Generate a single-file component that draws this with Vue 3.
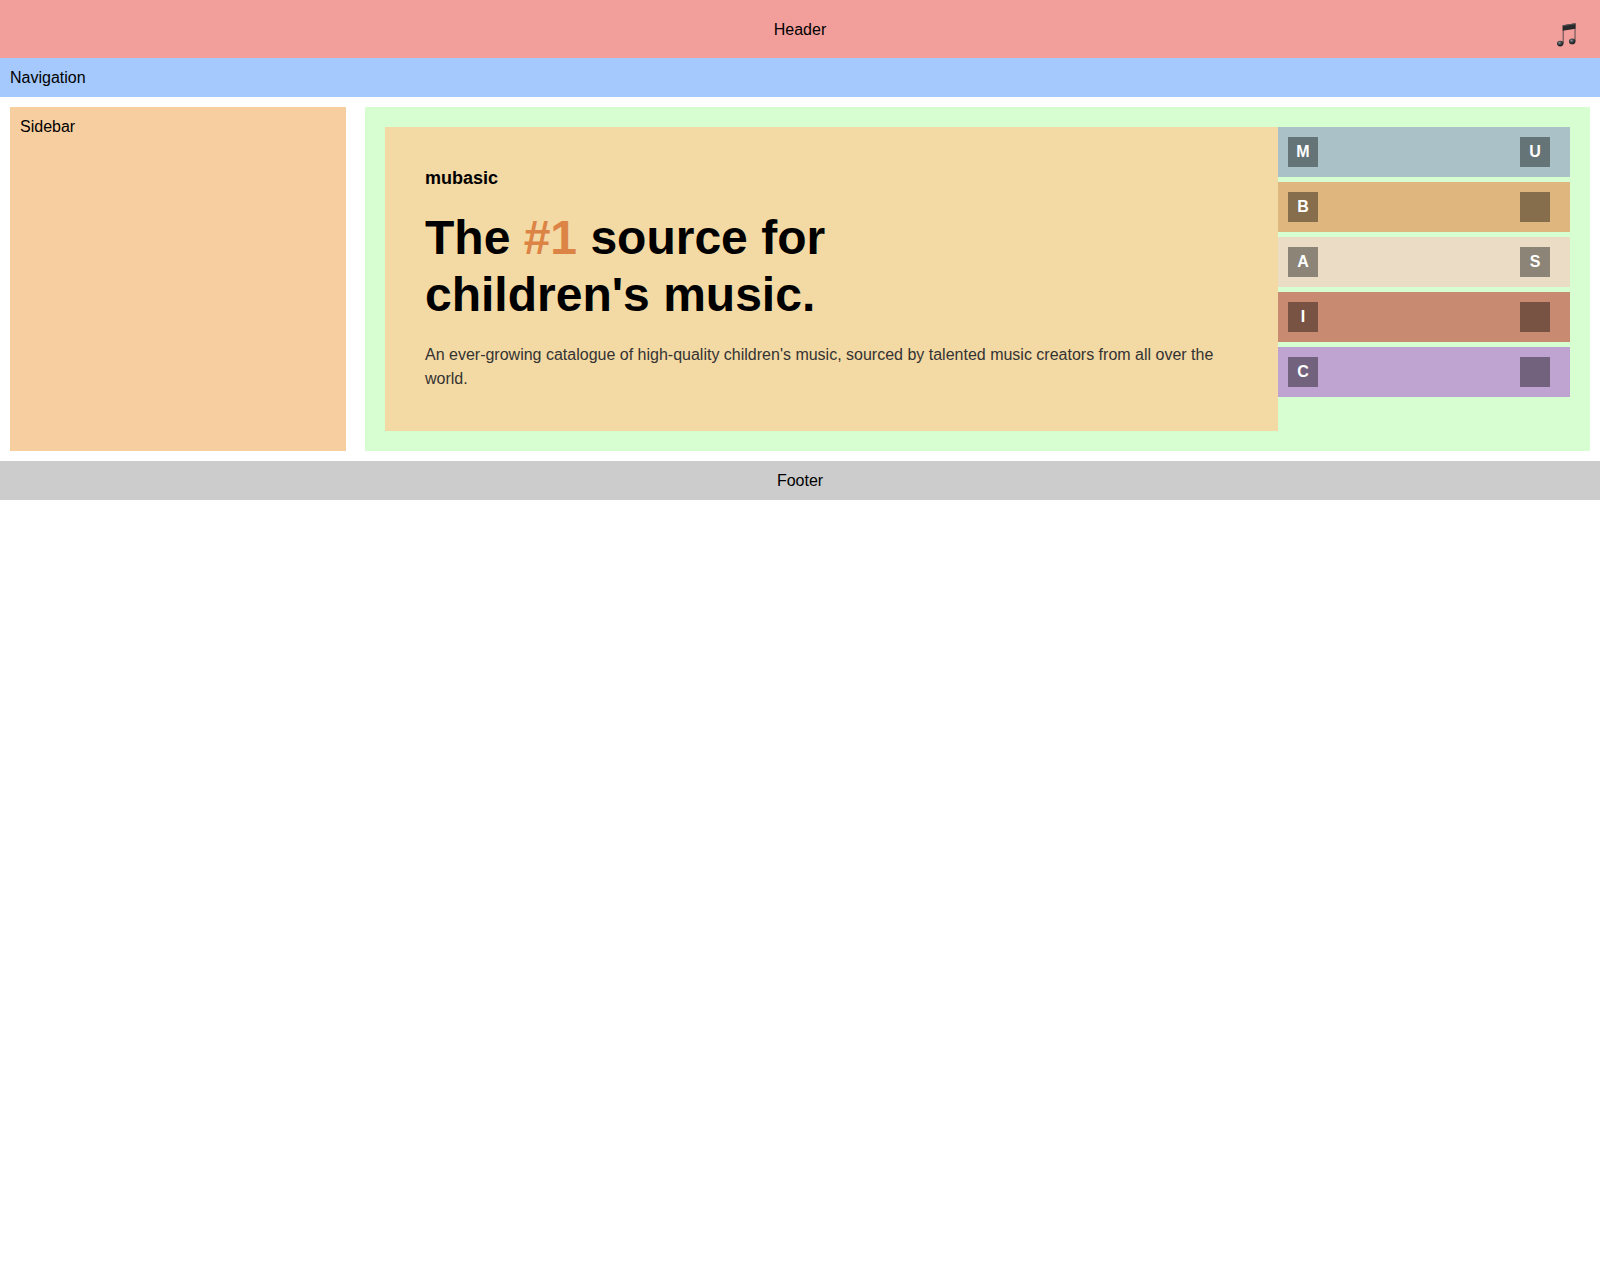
<script setup>
const rows = [
  { name: 'steel', keys: ['M', 'U'] },
  { name: 'ochre', keys: ['B', ''] },
  { name: 'sand', keys: ['A', 'S'] },
  { name: 'clay', keys: ['I', ''] },
  { name: 'lilac', keys: ['C', ''] },
]
</script>

<template>
  <div class="page">
    <header class="header">
      Header
      <svg class="note" viewBox="0 0 24 26" aria-hidden="true">
        <defs>
          <radialGradient id="note-head" cx="0.4" cy="0.35" r="0.6">
            <stop offset="0" stop-color="#8d9599" />
            <stop offset="0.5" stop-color="#3c4145" />
            <stop offset="1" stop-color="#1e2023" />
          </radialGradient>
        </defs>
        <path d="M7.2 4V21.5M19 2V19.5" fill="none" stroke="#55484b" stroke-width="1" />
        <path d="M6.7 3.2 19.5 1.2V6.8L6.7 8.8Z" fill="#29282a" />
        <path d="M6.7 3.2 19.5 1.2V2.2L6.7 4.2Z" fill="#5a5456" />
        <ellipse cx="4.2" cy="21.6" rx="3.2" ry="2.8" fill="url(#note-head)" />
        <ellipse cx="16.2" cy="19.4" rx="3.2" ry="2.8" fill="url(#note-head)" />
      </svg>
    </header>
    <nav class="nav">Navigation</nav>
    <div class="body">
      <aside class="sidebar">Sidebar</aside>
      <main class="content">
        <section class="hero">
          <h2 class="brand">mubasic</h2>
          <h1 class="title">The <span class="accent">#1</span> source for<br />children's music.</h1>
          <p class="lead">An ever-growing catalogue of high-quality children's music, sourced by talented music creators from all over the world.</p>
        </section>
        <div class="rows">
          <div v-for="row in rows" :key="row.name" class="row" :class="row.name">
            <span v-for="(key, i) in row.keys" :key="i" class="key">{{ key }}</span>
          </div>
        </div>
      </main>
    </div>
    <footer class="footer">Footer</footer>
  </div>
</template>

<style>
body {
  margin: 0;
  background: #fff;
}
</style>

<style scoped>
.page {
  font-family: "Liberation Sans", Arial, sans-serif;
  font-size: 16px;
  line-height: 19px;
  color: #000;
}
.header {
  position: relative;
  padding: 20px 20px 19px;
  text-align: center;
  background: #f29f9b;
}
.note {
  position: absolute;
  top: 22px;
  right: 20px;
  width: 24px;
  height: 26px;
}
.nav {
  padding: 10px;
  background: #a5c9fd;
}
.body {
  display: flex;
  gap: 19px;
  padding: 10px;
}
.sidebar {
  flex: 0 0 316px;
  padding: 10px;
  background: #f6cea0;
}
.content {
  flex: 1;
  display: flex;
  padding: 20px;
  background: #d6fed1;
}
.hero {
  flex: 1;
  padding: 40px;
  background: #f3d9a4;
}
.brand {
  margin: 0 0 20px;
  font-size: 18px;
  line-height: 22px;
}
.title {
  margin: 0 0 20px;
  font-size: 48px;
  line-height: 57px;
}
.accent {
  color: #dc8445;
}
.lead {
  margin: 0;
  line-height: 24px;
  color: #333;
}
.rows {
  flex: 0 0 292px;
  display: flex;
  flex-direction: column;
  gap: 5px;
}
.row {
  display: flex;
  justify-content: space-between;
  padding: 10px 20px 10px 10px;
}
.key {
  width: 30px;
  height: 30px;
  font-weight: bold;
  line-height: 30px;
  text-align: center;
  color: #fff;
  background: rgba(0, 0, 0, 0.4);
}
.steel { background: #a9c1c7; }
.ochre { background: #e0b67f; }
.sand { background: #eadcc5; }
.clay { background: #c98a72; }
.lilac { background: #bfa4d1; }
.footer {
  padding: 10px;
  text-align: center;
  background: #ccc;
}
</style>
